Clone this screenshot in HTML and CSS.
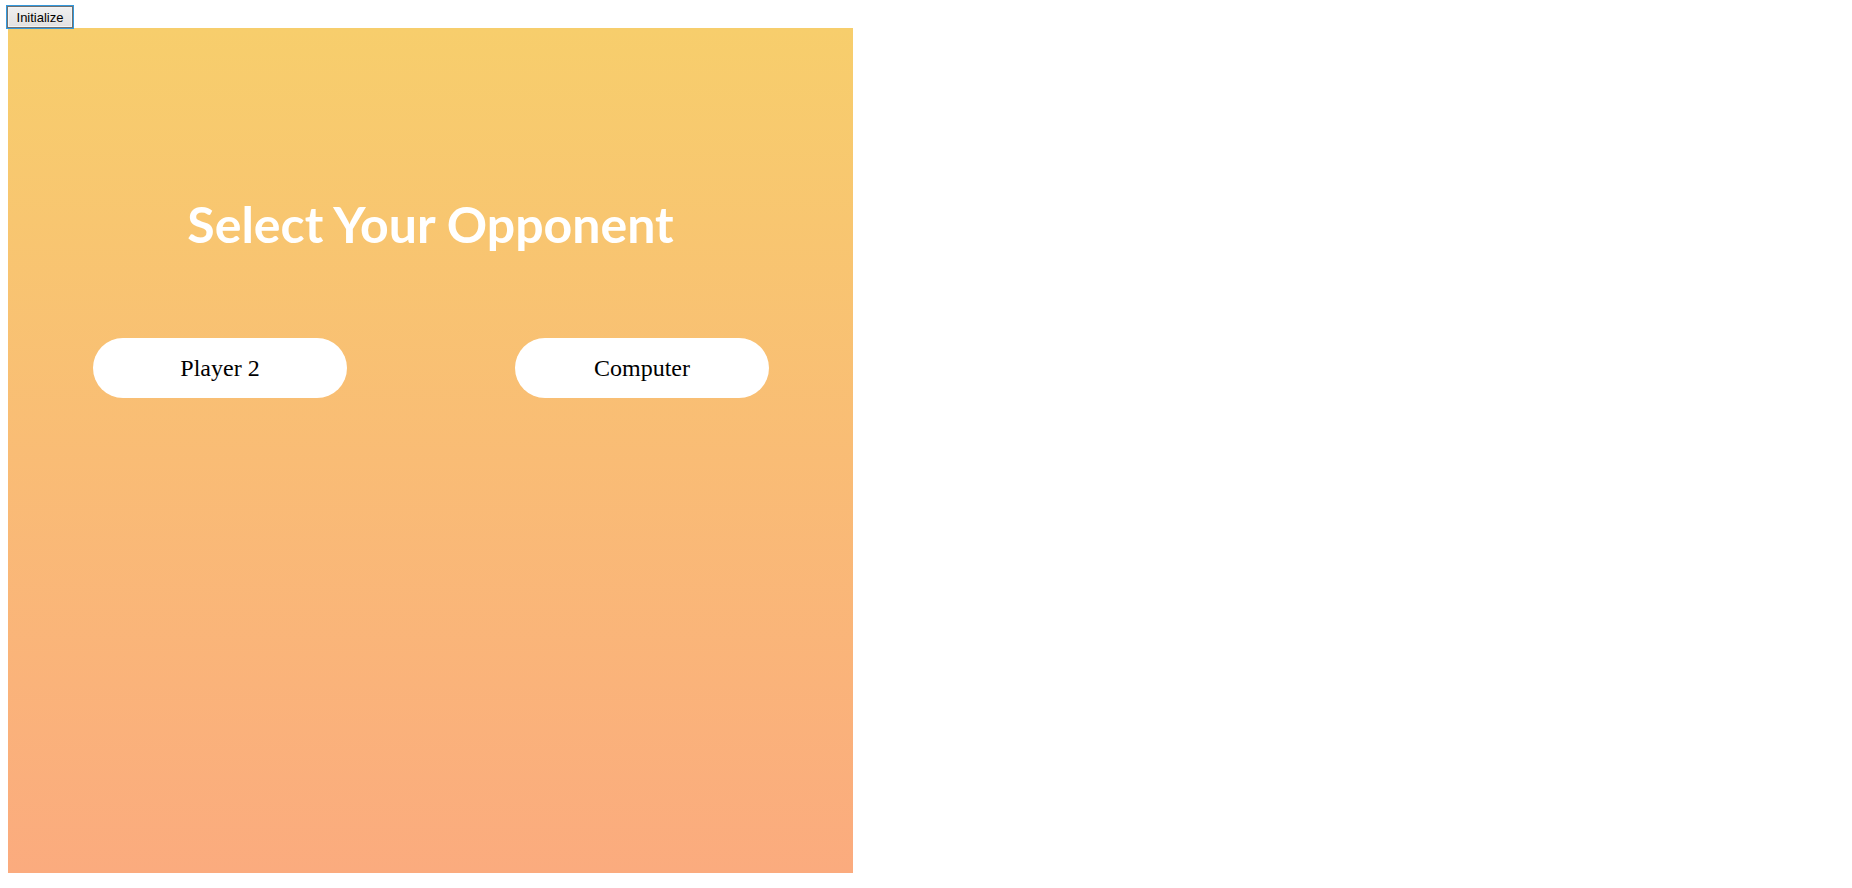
FILE: index.html
```html
<!DOCTYPE html>
<html>
<head>
<meta charset="utf-8">
<link rel="stylesheet" href="styles.css">
</head>
<body>
<button class="init-btn">Initialize</button>
<div class="panel">
  <h1 class="title">Select Your Opponent</h1>
  <div class="choices">
    <button class="choice">Player 2</button>
    <button class="choice">Computer</button>
  </div>
</div>
</body>
</html>
```
FILE: styles.css
```css
html, body {
  margin: 0;
  padding: 0;
  background: #fff;
}
body {
  padding: 6px 0 0 7px;
}
.init-btn {
  display: block;
  box-sizing: border-box;
  width: 66px;
  height: 22px;
  margin: 0;
  padding: 0;
  font-family: Arial, "Liberation Sans", sans-serif;
  font-size: 13px;
  color: #000;
  background: linear-gradient(#f0f0f0, #e1e1e1);
  border: 1px solid #707070;
  outline: 1px solid #3399dd;
  outline-offset: 0;
  box-shadow: inset 0 0 0 1px #f4f4f4;
}
.panel {
  box-sizing: border-box;
  width: 845px;
  height: 845px;
  margin-left: 1px;
  background: linear-gradient(to bottom, #f7ce6c, #fbab7e);
  padding-top: 166px;
}
.title {
  margin: 0;
  text-align: center;
  color: #fff;
  font-family: Lato, "Open Sans", sans-serif;
  font-weight: 700;
  font-size: 50px;
  line-height: 60px;
}
.choices {
  display: flex;
  justify-content: space-between;
  padding: 84px 84px 0 85px;
}
.choice {
  box-sizing: border-box;
  width: 254px;
  height: 60px;
  border: none;
  border-radius: 30px;
  background: #fff;
  color: #000;
  font-family: "Liberation Serif", "Times New Roman", serif;
  font-size: 24px;
  padding: 0;
}
```
